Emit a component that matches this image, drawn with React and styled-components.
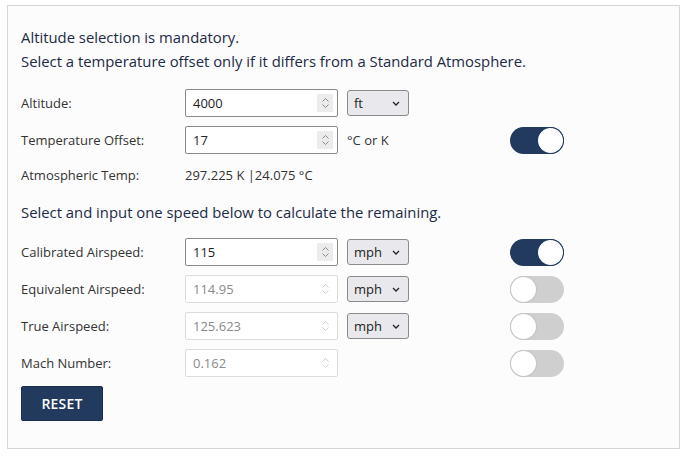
import styled, { createGlobalStyle } from "styled-components";

const GlobalStyle = createGlobalStyle`
  * {
    box-sizing: border-box;
  }

  body {
    margin: 0;
    background: #ffffff;
    font-family: "Open Sans", "Noto Sans", sans-serif;
  }
`;

const navy = "#213a5e";

const Card = styled.section`
  margin: 5px 10px 0 7px;
  padding: 19px 13px 27px;
  background: #fcfcfc;
  border: 1px solid #d6d6d6;
`;

const Heading = styled.h2`
  margin: 0;
  font-size: 14.85px;
  font-weight: 400;
  line-height: 24px;
  color: #1b2a45;
`;

const Intro = styled.div`
  margin-bottom: 16px;
`;

const SectionHeading = styled(Heading)`
  margin: 13px 0 14px;
`;

const Rows = styled.div`
  display: flex;
  flex-direction: column;
  gap: 9px;
`;

const Row = styled.div`
  display: grid;
  grid-template-columns: 164px 153px 172px 54px;
  align-items: center;
  height: ${(p) => (p.short ? "24px" : "28px")};
`;

const Label = styled.span`
  font-size: 13px;
  color: #333;
`;

const Field = styled.div`
  display: flex;
  align-items: center;
  height: 28px;
  padding: 0 4px 0 7px;
  background: #fff;
  border: 1px solid ${(p) => (p.disabled ? "#dcdcdc" : "#8a8a8a")};
  border-radius: 2px;
`;

const FieldInput = styled.input`
  flex: 1;
  min-width: 0;
  border: none;
  outline: none;
  padding: 0;
  background: transparent;
  font-family: inherit;
  font-size: 13px;
  color: ${(p) => (p.disabled ? "#8a8a8a" : "#222")};
`;

const Spinner = styled.span`
  display: flex;
  align-items: center;
  justify-content: center;
  width: 16px;
  height: 18px;
  background: ${(p) => (p.disabled ? "transparent" : "#ececec")};
  color: ${(p) => (p.disabled ? "#d0d0d0" : "#8a8a8a")};
`;

const Extra = styled.div`
  display: flex;
  align-items: center;
  padding-left: 9px;
  font-size: 13px;
  color: #333;
`;

const Select = styled.div`
  display: flex;
  align-items: center;
  justify-content: space-between;
  width: 62px;
  height: 26px;
  padding: 0 8px 0 6px;
  background: #e9e9ed;
  border: 1px solid #8a8a8a;
  border-radius: 3px;
  font-size: 13px;
  color: #222;
`;

const Value = styled.span`
  grid-column: span 3;
  font-size: 13px;
  color: #333;
`;

const Toggle = styled.span`
  position: relative;
  display: block;
  width: 54px;
  height: 27px;
  border-radius: 14px;
  background: ${(p) => (p.on ? navy : "#cfcfcf")};

  &::after {
    content: "";
    position: absolute;
    top: 1px;
    left: ${(p) => (p.on ? "28px" : "1px")};
    width: 25px;
    height: 25px;
    border-radius: 50%;
    background: #fff;
    box-shadow: 0 0 0 1px ${(p) => (p.on ? navy : "#c4c4c4")};
  }
`;

const Button = styled.button`
  width: 82px;
  height: 35px;
  border: 1px solid #1a2f4e;
  border-radius: 2px;
  background: ${navy};
  color: #fff;
  font-family: inherit;
  font-size: 14px;
  font-weight: 600;
  letter-spacing: 0.2px;
`;

const SpinIcon = () => (
  <svg width="9" height="14" viewBox="0 0 9 14" fill="none" stroke="currentColor" strokeWidth="1">
    <path d="M1.5 5.5 L4.5 2.5 L7.5 5.5" />
    <path d="M1.5 8.5 L4.5 11.5 L7.5 8.5" />
  </svg>
);

const Chevron = () => (
  <svg width="8" height="5" viewBox="0 0 8 5" fill="none" stroke="#222" strokeWidth="1.3">
    <path d="M1 1 L4 4 L7 1" />
  </svg>
);

const NumberField = ({ value, disabled }) => (
  <Field disabled={disabled}>
    <FieldInput defaultValue={value} disabled={disabled} />
    <Spinner disabled={disabled}>
      <SpinIcon />
    </Spinner>
  </Field>
);

const Unit = ({ children }) => (
  <Select>
    {children}
    <Chevron />
  </Select>
);

const speeds = [
  { label: "Calibrated Airspeed:", value: "115", unit: "mph", on: true },
  { label: "Equivalent Airspeed:", value: "114.95", unit: "mph" },
  { label: "True Airspeed:", value: "125.623", unit: "mph" },
  { label: "Mach Number:", value: "0.162" },
];

const App = () => {
  return (
    <>
      <GlobalStyle />
      <Card>
        <Intro>
          <Heading>Altitude selection is mandatory.</Heading>
          <Heading>
            Select a temperature offset only if it differs from a Standard
            Atmosphere.
          </Heading>
        </Intro>

        <Rows>
          <Row>
            <Label>Altitude:</Label>
            <NumberField value="4000" />
            <Extra>
              <Unit>ft</Unit>
            </Extra>
          </Row>
          <Row>
            <Label>Temperature Offset:</Label>
            <NumberField value="17" />
            <Extra>°C or K</Extra>
            <Toggle on />
          </Row>
          <Row short>
            <Label>Atmospheric Temp:</Label>
            <Value>297.225 K |24.075 °C</Value>
          </Row>
        </Rows>

        <SectionHeading>
          Select and input one speed below to calculate the remaining.
        </SectionHeading>

        <Rows>
          {speeds.map((s) => (
            <Row key={s.label}>
              <Label>{s.label}</Label>
              <NumberField value={s.value} disabled={!s.on} />
              <Extra>{s.unit && <Unit>{s.unit}</Unit>}</Extra>
              <Toggle on={s.on} />
            </Row>
          ))}
          <div>
            <Button>RESET</Button>
          </div>
        </Rows>
      </Card>
    </>
  );
};

export default App;
